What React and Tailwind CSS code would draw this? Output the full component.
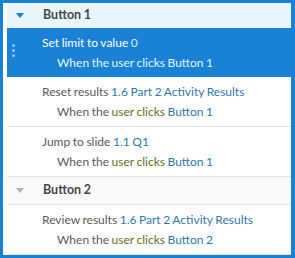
const rows = [
  { group: "Button 1" },
  { action: "Set limit to value", target: "0", who: "Button 1", selected: true },
  { action: "Reset results", target: "1.6 Part 2 Activity Results", who: "Button 1" },
  { action: "Jump to slide", target: "1.1 Q1", who: "Button 1" },
  { group: "Button 2" },
  { action: "Review results", target: "1.6 Part 2 Activity Results", who: "Button 2" },
];

function Caret({ color }) {
  return (
    <svg width="8" height="5" viewBox="0 0 8 5" className="shrink-0">
      <path d="M0 0 H8 L4 5 Z" fill={color} />
    </svg>
  );
}

function GroupRow({ label, first }) {
  return (
    <div
      className={
        first
          ? "h-[25px] bg-[#e9f5fd] flex items-center pl-[9px]"
          : "h-[28px] bg-[#f9f9f9] border-b border-[#e4e4e4] flex items-center pl-[9px]"
      }
    >
      <Caret color={first ? "#1a82d4" : "#b0b0b0"} />
      <span className="ml-[19px] font-bold text-[12.5px] text-[#474747]">{label}</span>
    </div>
  );
}

function ActionRow({ action, target, who, selected }) {
  if (selected) {
    return (
      <div className="relative h-[49px] bg-[#1a82d4] text-white pt-[5px]">
        <div className="absolute left-[5px] top-[16px] flex flex-col gap-[2px]">
          <span className="w-[3px] h-[3px] rounded-full bg-[#8cc6ee]" />
          <span className="w-[3px] h-[3px] rounded-full bg-[#8cc6ee]" />
          <span className="w-[3px] h-[3px] rounded-full bg-[#8cc6ee]" />
        </div>
        <div className="pl-[35px] leading-[20px]">
          {action} <span className="text-[#d8ecfb]">{target}</span>
        </div>
        <div className="pl-[50px] leading-[19px] text-[#e6f3fd]">
          When the user clicks {who}
        </div>
      </div>
    );
  }
  return (
    <div className="h-[50px] border-b border-[#e4e4e4] pt-[5px] text-[#5a5a5a]">
      <div className="pl-[35px] leading-[20px]">
        {action} <span className="text-[#2f78ad]">{target}</span>
      </div>
      <div className="pl-[50px] leading-[19px]">
        When the <span className="text-[#5f6f1c]">user clicks</span>{" "}
        <span className="text-[#2f78ad]">{who}</span>
      </div>
    </div>
  );
}

export default function App() {
  return (
    <div className="w-[295px] h-[258px] bg-[#1a82d4] pl-[3px] pt-[3px] pr-[4px] pb-[3px] font-['Lato',sans-serif] text-[12px] [word-spacing:-0.5px]">
      <div className="h-full bg-white pl-[4px] flex flex-col overflow-hidden">
        {rows.map((r, i) =>
          r.group ? (
            <GroupRow key={i} label={r.group} first={i === 0} />
          ) : (
            <ActionRow key={i} {...r} />
          )
        )}
      </div>
    </div>
  );
}
